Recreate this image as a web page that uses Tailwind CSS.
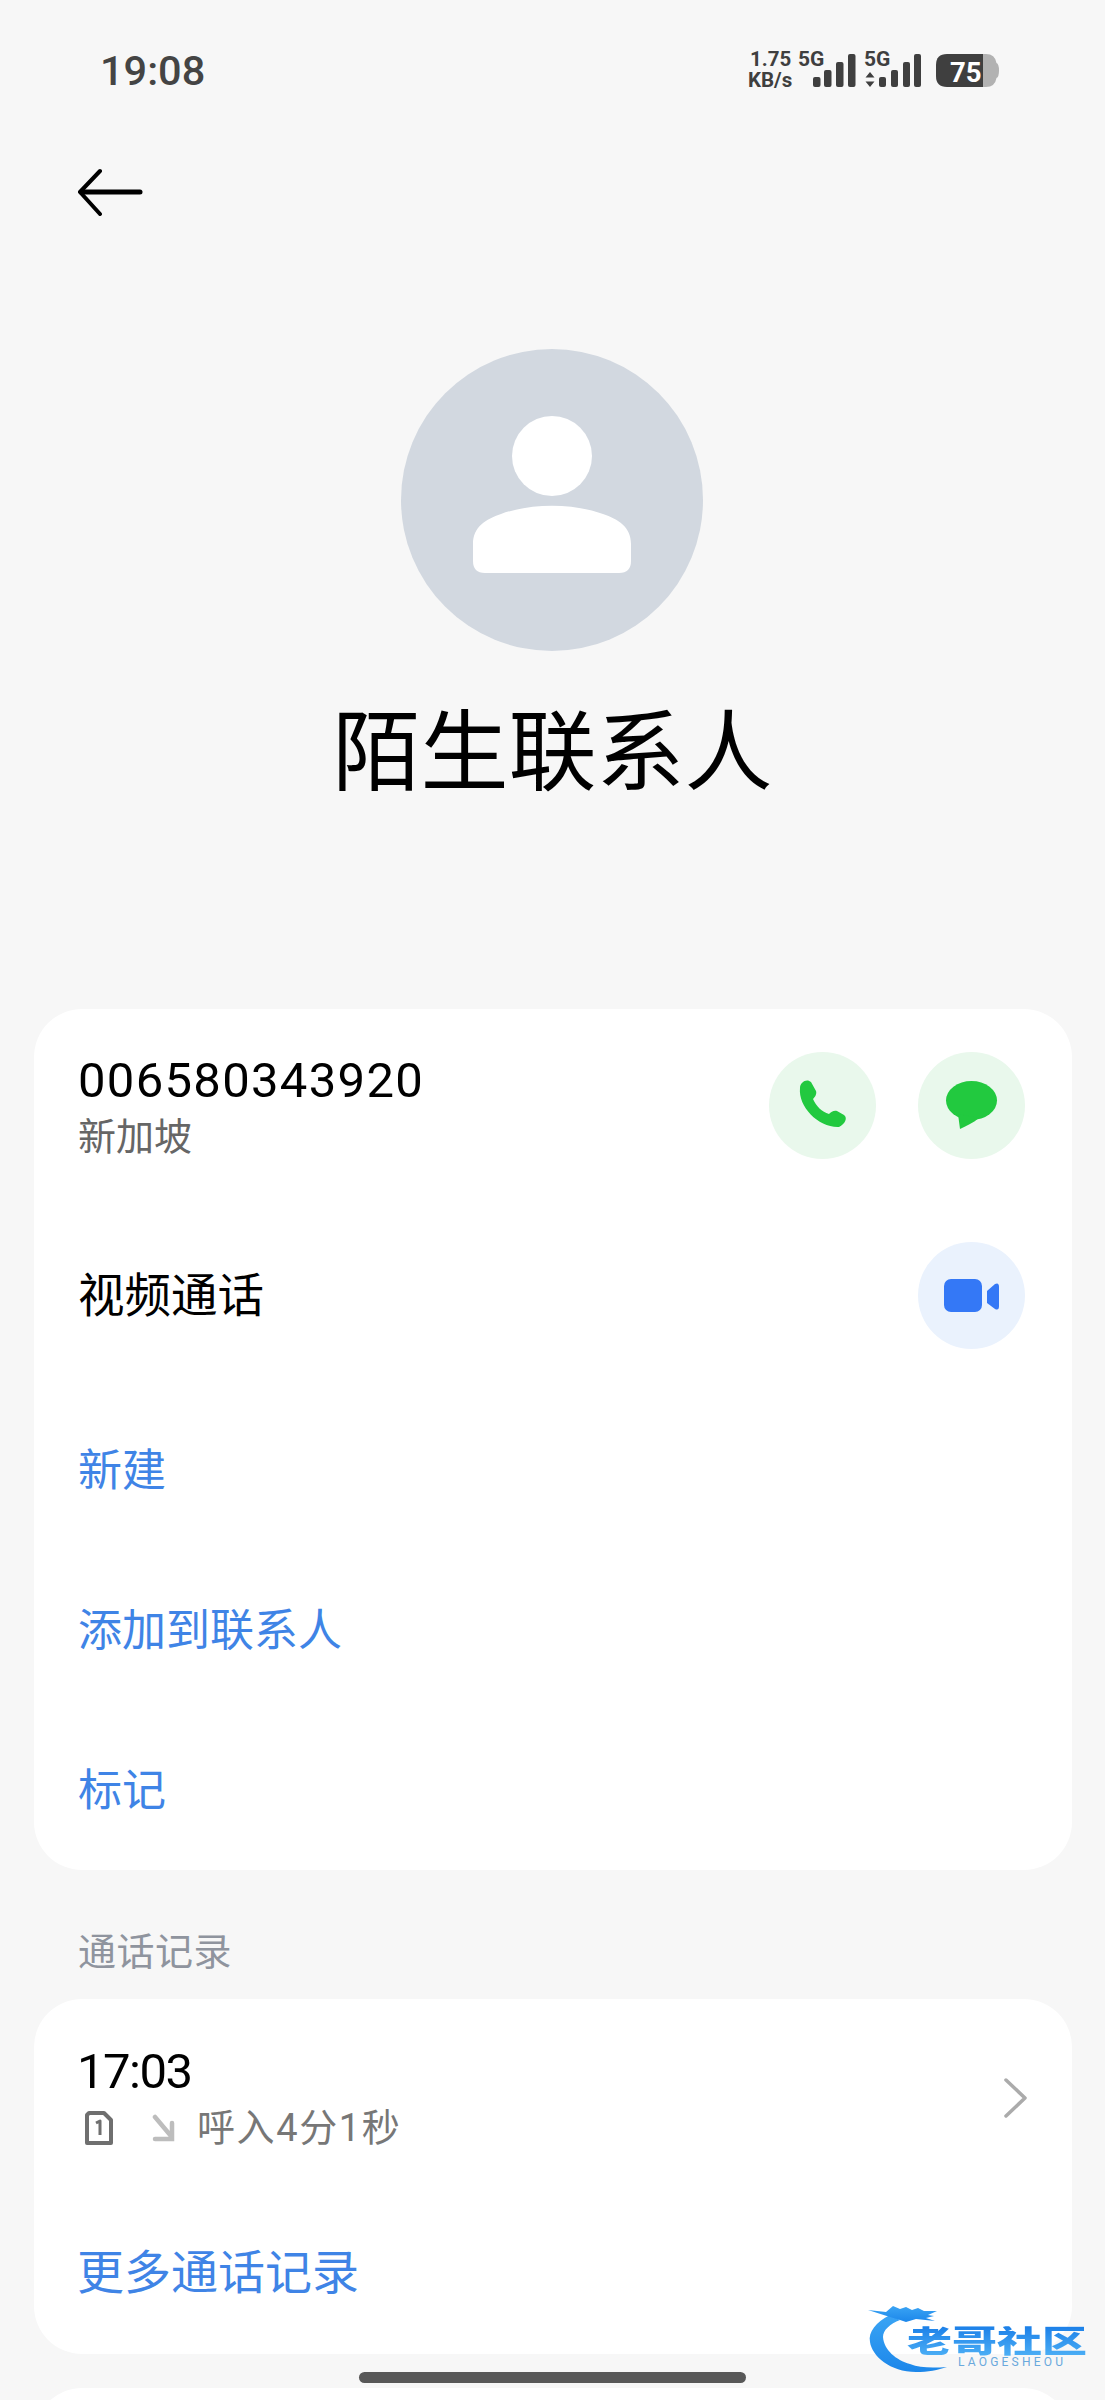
<!DOCTYPE html>
<html lang="zh-CN">
<head>
    <meta charset="UTF-8">
    <meta name="viewport" content="width=device-width, initial-scale=1.0">
    <title>陌生联系人</title>
    <script src="https://cdn.jsdelivr.net/npm/@tailwindcss/browser@4"></script>
</head>
<body class="bg-[#f7f7f7] font-['Roboto','Noto_Sans_CJK_SC',sans-serif]">
    <div class="relative w-[1105px] h-[2400px] overflow-hidden">
        <!-- status bar -->
        <div class="flex justify-between items-start pt-[50px] pl-[100px] pr-[105px] h-[92px]">
            <span class="text-[41.5px] leading-[42px] font-medium text-[#444444]">19:08</span>
            <svg width="252" height="40" viewBox="0 0 252 40" class="overflow-visible" fill="#3f3f3f" font-family="Roboto" font-weight="700">
                <text x="2" y="16" font-size="20.5">1.75</text>
                <text x="0" y="37" font-size="20.5">KB/s</text>
                <text x="50" y="16" font-size="21">5G</text>
                <rect x="65" y="27" width="7.500" height="10" rx="2"/>
                <rect x="76" y="20" width="7.500" height="17" rx="2"/>
                <rect x="88" y="12" width="7.500" height="25" rx="2"/>
                <rect x="100" y="4" width="7.500" height="33" rx="2"/>
                <text x="116" y="16" font-size="21">5G</text>
                <path d="M122 22l4.500 5.500h-9zM122 37l4.500-5.500h-9z"/>
                <rect x="131" y="27" width="7" height="10" rx="2"/>
                <rect x="143" y="20" width="7" height="17" rx="2"/>
                <rect x="155" y="12" width="7" height="25" rx="2"/>
                <rect x="166" y="4" width="7" height="33" rx="2"/>
                <path d="M234 4h4q9 0 10.500 9q2.500 1 2.500 7.500t-2.500 7.500q-1.500 9-10.500 9h-4z" fill="#b2b2b2"/>
                <path d="M199 4h36v33h-36q-11 0-11-11v-11q0-11 11-11z"/>
                <text x="202" y="32" font-size="27.500" fill="#ffffff">75</text>
            </svg>
        </div>

        <!-- back -->
        <div class="mt-[76px] pl-[77px] h-[48px]">
            <svg width="66" height="48" viewBox="0 0 66 48" fill="none" stroke="#000000" stroke-linecap="round" stroke-linejoin="round">
                <path d="M23 3L3 24L23 46" stroke-width="4"/>
                <path d="M4 24H63" stroke-width="5"/>
            </svg>
        </div>

        <!-- avatar + name -->
        <div class="flex justify-center mt-[133px] pr-[1px]">
            <svg width="302" height="302" viewBox="0 0 302 302">
                <circle cx="151" cy="151" r="151" fill="#d2d8e0"/>
                <circle cx="151" cy="107" r="40" fill="#ffffff"/>
                <path d="M72 195C72 178 85 170 100 165C130 154 172 154 202 165C217 170 230 178 230 195V212Q230 224 218 224H84Q72 224 72 212Z" fill="#ffffff"/>
            </svg>
        </div>
        <div class="mt-[52px] h-[100px] text-center text-[88px] leading-[100px] text-black">陌生联系人</div>

        <!-- number card -->
        <div class="mt-[206px] ml-[34px] mr-[33px] bg-white rounded-[48px] pt-[43px] pl-[44px] pr-[47px] h-[861px]">
            <div class="flex justify-between items-center h-[107px]">
                <div>
                    <div class="pt-[4px] text-[49px] leading-[56px] tracking-[1.3px] text-black">006580343920</div>
                    <div class="text-[38px] leading-[50px] mt-[3px] text-[#666666]">新加坡</div>
                </div>
                <div class="flex gap-[42px]">
                    <div class="w-[107px] h-[107px] rounded-full bg-[#e9f8ec]">
                        <svg width="107" height="107" viewBox="0 0 107 107" fill="#22c93f">
                            <path d="M31 36C31 30 38 26 42 30L47 39C48 42 46 45 44 47C47 54 53 60 60 62C62 60 65 58 68 59L75 63C79 66 76 72 70 75C50 76 29 55 31 36Z"/>
                        </svg>
                    </div>
                    <div class="w-[107px] h-[107px] rounded-full bg-[#e9f8ec]">
                        <svg width="107" height="107" viewBox="0 0 107 107" fill="#22c93f">
                            <ellipse cx="53.500" cy="48.500" rx="25.500" ry="19.500"/>
                            <path d="M40 62L42 77C48 74 55 71 61 66Z"/>
                        </svg>
                    </div>
                </div>
            </div>
            <div class="flex justify-between items-center h-[107px] mt-[83px]">
                <span class="pt-[2px] text-[46.5px] text-black">视频通话</span>
                <div class="w-[107px] h-[107px] rounded-full bg-[#eaf2fd]">
                    <svg width="107" height="107" viewBox="0 0 107 107" fill="#3478f6">
                        <rect x="26" y="37" width="38" height="33" rx="7"/>
                        <path d="M69 49L77 42Q81 40 81 45V64Q81 69 77 67L69 61Z"/>
                    </svg>
                </div>
            </div>
            <div class="mt-[42px] text-[44px] text-[#3f84e6]">
                <div class="flex items-center h-[160px]">新建</div>
                <div class="flex items-center h-[160px]">添加到联系人</div>
                <div class="flex items-center h-[160px]">标记</div>
            </div>
        </div>

        <!-- call log -->
        <div class="mt-[63px] mb-[28px] pl-[78px] text-[38px] leading-[38px] tracking-[0.5px] text-[#8f949e]">通话记录</div>
        <div class="ml-[34px] mr-[33px] bg-white rounded-[48px] pt-[46px] pl-[44px] pr-[43px] h-[355px]">
            <div class="flex justify-between items-center h-[106px]">
                <div>
                    <div class="pt-[2px] -ml-[1px] text-[49px] leading-[50px] tracking-[-1.5px] text-black">17:03</div>
                    <div class="flex items-center mt-[8px] h-[46px] text-[38px] text-[#777777]">
                        <svg width="28" height="34" viewBox="0 0 28 34" class="ml-[7px]" fill="none" stroke="#6f6f6f" stroke-width="4" stroke-linejoin="round">
                            <path d="M4 2H19L26 9V32H2V4Z"/>
                            <path d="M11 12L15 10V24" stroke-width="3"/>
                        </svg>
                        <svg width="24" height="28" viewBox="0 0 24 28" class="ml-[39px]" fill="none" stroke="#bdbdbd" stroke-width="4.500" stroke-linecap="round">
                            <path d="M3 3L19 22M3 25H20V9"/>
                        </svg>
                        <span class="ml-[21px] tracking-[1.6px]">呼入4分1秒</span>
                    </div>
                </div>
                <svg width="26" height="42" viewBox="0 0 26 42" fill="none" stroke="#ababab" stroke-width="3.500" stroke-linecap="round" stroke-linejoin="round">
                    <path d="M3 3L22 21L3 39"/>
                </svg>
            </div>
            <div class="flex items-center mt-[97px] h-[50px] text-[47px] -ml-[1px] text-[#3f84e6]">更多通话记录</div>
        </div>
        <div class="mt-[34px] mx-[34px] bg-white rounded-[48px] h-[200px]"></div>

        <!-- home indicator -->
        <div class="absolute left-[359px] top-[2372px] w-[387px] h-[11px] rounded-full bg-[#585858]"></div>

        <!-- watermark -->
        <div class="absolute left-[866px] top-[2300px] w-[225px] h-[72px]">
            <svg width="90" height="74" viewBox="0 0 90 74" class="absolute left-0 top-0">
                <defs>
                    <linearGradient id="swoosh" x1="0" y1="0" x2="0" y2="1">
                        <stop offset="0" stop-color="#3aa4f4"/>
                        <stop offset="1" stop-color="#1c87ea"/>
                    </linearGradient>
                </defs>
                <path d="M24 15C10 22 2 32 4 42C6 56 24 72 50 72C62 72 72 70 81 67C66 68 54 68 44 64C30 60 18 50 17 37C17 30 24 24 34 20Z" fill="url(#swoosh)"/>
                <path d="M2 10L20 12L27 6L34 9L40 7L46 10L52 8L58 11L71 11L62 15L68 16L60 18L69 21L50 19L40 22L34 20L24 17Z" fill="url(#swoosh)"/>
            </svg>
            <div class="absolute left-[41px] top-[19px] text-[45px] leading-[45px] font-black whitespace-nowrap scale-y-[0.68] text-transparent bg-clip-text bg-linear-to-b from-[#1b7fe8] to-[#4db0f5]">老哥社区</div>
            <div class="absolute left-[92px] top-[56px] text-[12px] leading-[12px] tracking-[3.200px] whitespace-nowrap text-[#6aa9dd]">LAOGESHEOU</div>
        </div>
    </div>
</body>
</html>
